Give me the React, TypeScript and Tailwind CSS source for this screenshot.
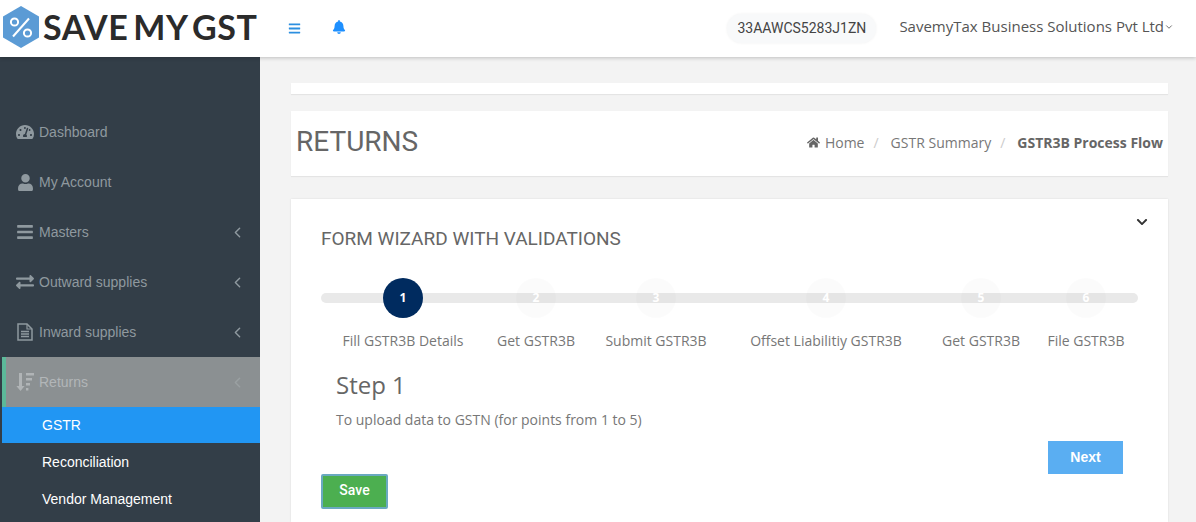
import { ChevronLeft, ChevronDown } from 'lucide-react';
import { FaBars, FaBell, FaChevronDown, FaExchangeAlt, FaHome, FaTachometerAlt, FaUser } from 'react-icons/fa';

// font-awesome 4 style file-text-o and sort-amount-desc, react-icons only has the newer ones
function FileIcon() {
  return (
    <svg width="16" height="18" viewBox="0 0 16 18" fill="none" stroke="currentColor">
      <path d="M1 1h9l5 5v11H1z" strokeWidth="1.5" />
      <path d="M10 1v5h5" strokeWidth="1.2" />
      <path d="M4 8.5h8M4 11h8M4 13.5h8" strokeWidth="1.3" />
    </svg>
  );
}

function SortIcon() {
  return (
    <svg width="18" height="20" viewBox="0 0 18 20" fill="currentColor">
      <path d="M3 1h3v13h2.6L4.5 19 .4 14H3z" />
      <path d="M10 1h8v2.6h-8zM10 6h6v2.6h-6zM10 11h4v2.6h-4zM10 16h2.4v2.6H10z" />
    </svg>
  );
}

const menu = [
  { label: 'Dashboard', icon: <FaTachometerAlt className="w-[18px] h-[18px]" /> },
  { label: 'My Account', icon: <FaUser className="w-[17px] h-[17px]" /> },
  { label: 'Masters', icon: <FaBars className="w-[18px] h-[18px]" />, arrow: true },
  { label: 'Outward supplies', icon: <FaExchangeAlt className="w-[18px] h-[18px]" />, arrow: true },
  { label: 'Inward supplies', icon: <FileIcon />, arrow: true },
];

const steps = [
  { n: 1, label: 'Fill GSTR3B Details', width: 'w-[164px]' },
  { n: 2, label: 'Get GSTR3B', width: 'w-[102px]' },
  { n: 3, label: 'Submit GSTR3B', width: 'w-[138px]' },
  { n: 4, label: 'Offset Liabilitiy GSTR3B', width: 'w-[202px]' },
  { n: 5, label: 'Get GSTR3B', width: 'w-[108px]' },
  { n: 6, label: 'File GSTR3B', width: 'w-[102px]' },
];

function Logo() {
  return (
    <div className="flex items-center -mt-[3px]">
      <svg width="40" height="44" viewBox="0 0 40 44" className="ml-[1px]">
        <polygon points="20,1 38,11.5 38,32.5 20,43 2,32.5 2,11.5" fill="#5b9bd5" />
        <circle cx="13.5" cy="17" r="3.6" fill="none" stroke="#fff" strokeWidth="2" />
        <circle cx="26.5" cy="28" r="3.6" fill="none" stroke="#fff" strokeWidth="2" />
        <line x1="28" y1="13.5" x2="12" y2="31.5" stroke="#fff" strokeWidth="2" />
      </svg>
      <span className="ml-[2px] font-['Lato',sans-serif] font-bold text-[34px] leading-none tracking-[0.6px] [word-spacing:-4px] text-[#2b2b2b] whitespace-nowrap">SAVE MY GST</span>
    </div>
  );
}

export default function App() {
  return (
    <div className="w-[1196px] h-[522px] overflow-hidden flex flex-col bg-[#f3f3f3] font-['Open_Sans',sans-serif]">
      <header className="relative z-10 h-[57px] shrink-0 bg-white flex items-center shadow-[0_1px_4px_rgba(0,0,0,0.22)]">
        <div className="w-[258px] shrink-0"><Logo /></div>
        <FaBars className="ml-[30px] -mt-[1px] w-[13px] h-[13px] text-[#2c8fe0]" />
        <FaBell className="ml-[31px] -mt-[3px] w-[14px] h-[14px] text-[#1e90ff]" />
        <div className="ml-auto flex items-center pr-[22px]">
          <div className="h-[29px] w-[149px] flex items-center justify-center rounded-full bg-[#f8f9fa] font-['Roboto',sans-serif] text-[14px] text-[#444] shadow-[0_0_3px_rgba(0,0,0,0.06)]">33AAWCS5283J1ZN</div>
          <div className="ml-[23px] flex items-center text-[15px] text-[#555] -mt-[5px] whitespace-nowrap">
            SavemyTax Business Solutions Pvt Ltd
            <ChevronDown className="w-[10px] h-[10px] mt-[1px]" strokeWidth={2} />
          </div>
        </div>
      </header>

      <div className="flex flex-1 min-h-0">
        <aside className="w-[260px] shrink-0 bg-[#333e48] pt-[50px] font-['Liberation_Sans',sans-serif] text-[14px]">
          {menu.map((m) => (
            <div key={m.label} className="h-[50px] flex items-center pl-[16px] pr-[14px] text-[#8f999f]">
              <span className="w-[18px] flex justify-center">{m.icon}</span>
              <span className="ml-[5px]">{m.label}</span>
              {m.arrow && <ChevronLeft className="ml-auto w-[17px] h-[17px]" strokeWidth={2} />}
            </div>
          ))}
          <div className="ml-[2px] h-[50px] flex items-center pl-[10px] pr-[14px] bg-[#8b9092] border-l-[4px] border-[#5cb99a] text-[#b2b6b8]">
            <span className="w-[18px] flex justify-center text-[#b0b4b6]"><SortIcon /></span>
            <span className="ml-[5px]">Returns</span>
            <ChevronLeft className="ml-auto w-[17px] h-[17px] text-[#9aa0a2]" strokeWidth={2} />
          </div>
          <div className="ml-[2px] h-[36px] flex items-center pl-[40px] bg-[#2196f3] text-white">GSTR</div>
          <div className="h-[37px] flex items-center pl-[42px] pt-[1px] text-white">Reconciliation</div>
          <div className="h-[37px] flex items-center pl-[42px] pt-[1px] text-white">Vendor Management</div>
        </aside>

        <main className="flex-1 min-w-0 pt-[26px] pl-[31px] pr-[28px] flex flex-col">
          <div className="h-[11px] shrink-0 bg-white shadow-[0_1px_1px_rgba(0,0,0,0.06)]" />
          <div className="mt-[17px] h-[65px] shrink-0 bg-white flex items-center justify-between pl-[5px] pr-[5px] pb-[4px] shadow-[0_1px_1px_rgba(0,0,0,0.06)]">
            <h1 className="font-['Roboto',sans-serif] text-[28px] text-[#666]">RETURNS</h1>
            <div className="flex items-center text-[14px] text-[#777] mt-[1px]">
              <FaHome className="w-[13px] h-[13px] text-[#666] mr-[5px]" />
              <span>Home</span>
              <span className="ml-[9px] mr-[12px] text-[#ccc]">/</span>
              <span>GSTR Summary</span>
              <span className="ml-[9px] mr-[12px] text-[#ccc]">/</span>
              <span className="font-bold text-[#666]">GSTR3B Process Flow</span>
            </div>
          </div>

          <section className="relative mt-[23px] flex-1 bg-white pt-[28px] pl-[30px] pr-[30px] shadow-[0_0_2px_rgba(0,0,0,0.1)]">
            <FaChevronDown className="absolute top-[17px] right-[20px] w-[12px] h-[12px] text-[#333]" />
            <h2 className="font-['Roboto',sans-serif] text-[19px] leading-[24px] text-[#666]">FORM WIZARD WITH VALIDATIONS</h2>

            <div className="relative mt-[27px] w-[817px]">
              <div className="absolute top-[15px] left-0 right-0 h-[10px] rounded-full bg-[#e9e9e9]" />
              <div className="relative flex">
                {steps.map((s) => (
                  <div key={s.n} className={`${s.width} flex flex-col items-center`}>
                    <div className={`w-[40px] h-[40px] rounded-full flex items-center justify-center text-[12px] font-bold ${s.n === 1 ? 'bg-[#002b5f] text-white' : 'bg-black/[0.015] text-white'}`}>
                      {s.n}
                    </div>
                    <div className="mt-[13px] text-[14px] leading-[20px] text-[#777] whitespace-nowrap">{s.label}</div>
                  </div>
                ))}
              </div>
            </div>

            <div className="pl-[15px] mt-[18px]">
              <h3 className="text-[24px] leading-[32px] text-[#666]">Step 1</h3>
              <p className="mt-[9px] text-[14px] leading-[20px] text-[#777]">To upload data to GSTN (for points from 1 to 5)</p>
            </div>

            <div className="flex justify-end pr-[15px] mt-[11px]">
              <button className="w-[75px] h-[33px] bg-[#5aaef2] text-white font-['Liberation_Sans',sans-serif] font-bold text-[14px]">Next</button>
            </div>
            <button className="block w-[67px] h-[35px] pb-[2px] bg-[#4caf50] border-2 border-[#6aa9c0] rounded-[2px] text-white font-['Roboto',sans-serif] font-medium text-[14px]">Save</button>
          </section>
        </main>
      </div>
    </div>
  );
}
